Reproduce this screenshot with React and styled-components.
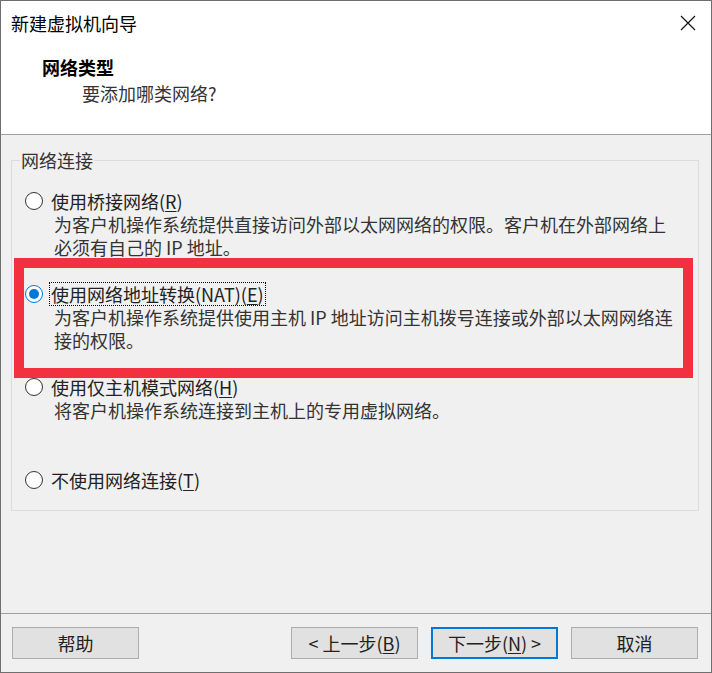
import React from 'react'
import styled, { createGlobalStyle } from 'styled-components'

const Global = createGlobalStyle`
  html, body {
    margin: 0;
    padding: 0;
    background: #ffffff;
  }
  * {
    box-sizing: border-box;
  }
`

const Window = styled.div`
  width: 712px;
  height: 673px;
  display: flex;
  flex-direction: column;
  border: 1px solid #6f6f6f;
  background: #f0f0f0;
  font-family: "Noto Sans CJK SC", "Microsoft YaHei", sans-serif;
  font-size: 18px;
  color: #000;
`

const TitleBar = styled.div`
  height: 44px;
  display: flex;
  align-items: center;
  justify-content: space-between;
  padding: 0 15px 0 10px;
  background: #fff;
`

const Title = styled.span`
  font-size: 18px;
  line-height: 24px;
`

const Close = styled.svg`
  width: 16px;
  height: 16px;
`

const Header = styled.div`
  height: 90px;
  padding: 10px 0 0 41px;
  background: #fff;
  border-bottom: 1px solid #a0a0a0;
`

const HeaderTitle = styled.div`
  font-weight: 700;
  line-height: 24px;
`

const HeaderSub = styled.div`
  margin: 2px 0 0 40px;
  line-height: 24px;
  color: #333;
`

const Body = styled.div`
  flex: 1;
  padding: 13px 12px 0 10px;
`

const Group = styled.fieldset`
  margin: 0;
  padding: 17px 0 18px 0;
  border: 1px solid #dcdcdc;
  min-width: 0;
`

const Legend = styled.legend`
  margin-left: 8px;
  padding: 0 1px;
  line-height: 24px;
  color: #333;
`

const Options = styled.div`
  display: flex;
  flex-direction: column;
  gap: 23px;
`

const Option = styled.div`
  position: relative;
  padding-left: 13px;

  ${p => p.$highlight && `
    &::after {
      content: "";
      position: absolute;
      left: 2px;
      right: 5px;
      top: -24px;
      bottom: -26px;
      border: 10px solid #f2303f;
      pointer-events: none;
    }
  `}
`

const Row = styled.div`
  display: flex;
  align-items: center;
  height: 24px;
  gap: 6px;
`

const Radio = styled.span`
  width: 18px;
  height: 18px;
  border-radius: 50%;
  border: 1px solid ${p => (p.$checked ? '#0078d7' : '#333')};
  background: #fff;
  display: flex;
  align-items: center;
  justify-content: center;
  flex: none;

  &::after {
    content: "";
    width: 10px;
    height: 10px;
    border-radius: 50%;
    background: ${p => (p.$checked ? '#0078d7' : 'transparent')};
  }
`

const Label = styled.span`
  line-height: 22px;
  padding: 0 1px;
  border: 1px dotted ${p => (p.$focus ? '#000' : 'transparent')};
  color: #222;
`

const Key = styled.u`
  text-underline-offset: 2px;
`

const Desc = styled.p`
  margin: 0 0 0 29px;
  min-height: 46px;
  line-height: 23px;
  color: #333;
`

const Footer = styled.div`
  height: 59px;
  border-top: 1px solid #a0a0a0;
  display: flex;
  padding: 13px 13px 0 11px;
  gap: 13px;
`

const Button = styled.button`
  width: 127px;
  height: 32px;
  font: inherit;
  font-size: 18px;
  color: #222;
  background: #e1e1e1;
  border: ${p => (p.$default ? '2px solid #0078d7' : '1px solid #adadad')};
  padding: 0;
  display: flex;
  align-items: center;
  justify-content: center;
  margin-left: ${p => (p.$push ? 'auto' : '0')};
`

const options = [
  {
    label: '使用桥接网络',
    key: 'R',
    lines: ['为客户机操作系统提供直接访问外部以太网网络的权限。客户机在外部网络上', '必须有自己的 IP 地址。'],
  },
  {
    label: '使用网络地址转换(NAT)',
    key: 'E',
    checked: true,
    lines: ['为客户机操作系统提供使用主机 IP 地址访问主机拨号连接或外部以太网网络连', '接的权限。'],
  },
  {
    label: '使用仅主机模式网络',
    key: 'H',
    lines: ['将客户机操作系统连接到主机上的专用虚拟网络。'],
  },
  {
    label: '不使用网络连接',
    key: 'T',
  },
]

export default function App() {
  return (
    <>
      <Global />
      <Window>
        <TitleBar>
          <Title>新建虚拟机向导</Title>
          <Close viewBox="0 0 16 16">
            <path d="M1 1 L15 15 M15 1 L1 15" stroke="#111" strokeWidth="1.2" fill="none" />
          </Close>
        </TitleBar>
        <Header>
          <HeaderTitle>网络类型</HeaderTitle>
          <HeaderSub>要添加哪类网络?</HeaderSub>
        </Header>
        <Body>
          <Group>
            <Legend>网络连接</Legend>
            <Options>
              {options.map(o => (
                <Option key={o.key} $highlight={o.checked}>
                  <Row>
                    <Radio $checked={o.checked} />
                    <Label $focus={o.checked}>
                      {o.label}(<Key>{o.key}</Key>)
                    </Label>
                  </Row>
                  {o.lines && (
                    <Desc>
                      {o.lines.map((l, i) => (
                        <React.Fragment key={l}>
                          {i > 0 && <br />}
                          {l}
                        </React.Fragment>
                      ))}
                    </Desc>
                  )}
                </Option>
              ))}
            </Options>
          </Group>
        </Body>
        <Footer>
          <Button>帮助</Button>
          <Button $push>&lt; 上一步(<Key>B</Key>)</Button>
          <Button $default>下一步(<Key>N</Key>) &gt;</Button>
          <Button>取消</Button>
        </Footer>
      </Window>
    </>
  )
}
